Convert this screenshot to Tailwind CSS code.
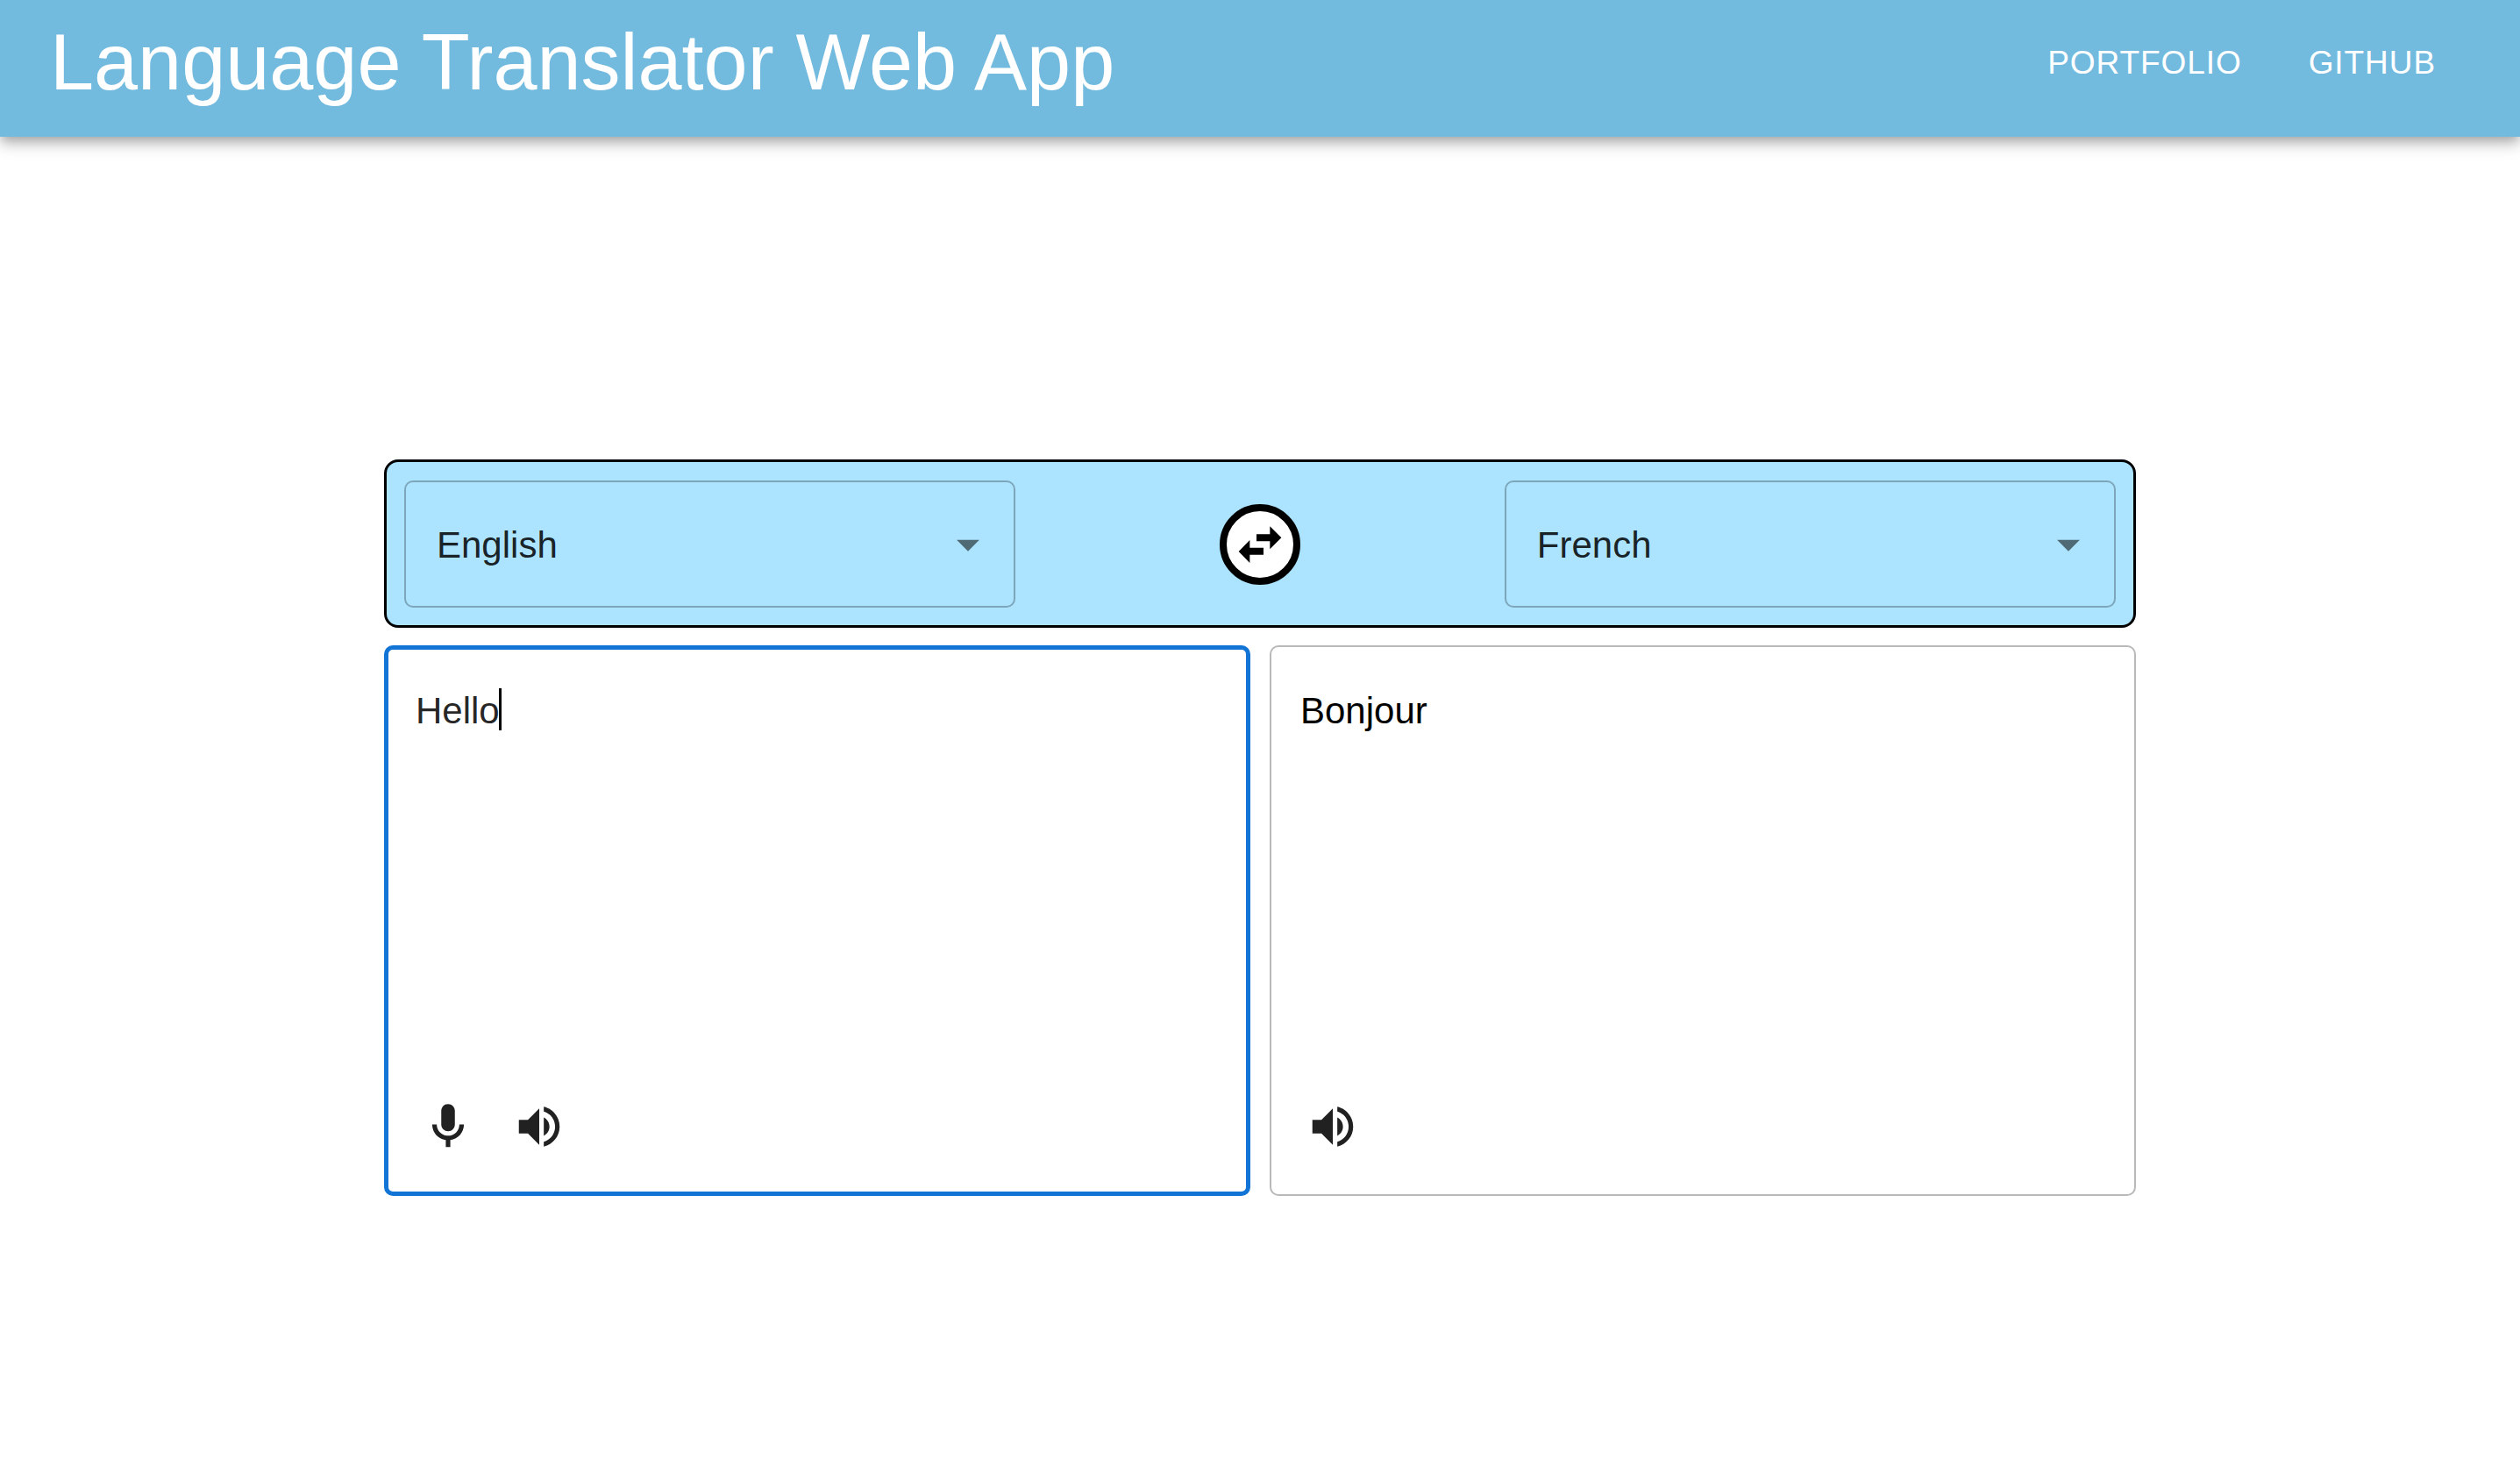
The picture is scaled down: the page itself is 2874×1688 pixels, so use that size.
<!DOCTYPE html>
<html lang="en">
<head>
<meta charset="utf-8">
<title>Language Translator Web App</title>
<script src="https://cdn.jsdelivr.net/npm/@tailwindcss/browser@4"></script>
</head>
<body class="min-h-screen bg-white font-['Liberation_Sans',Arial,sans-serif] text-[42px] leading-[60px] text-black/87">
<header class="flex min-h-[156px] items-center justify-between bg-[#73badf] pb-[14px] pl-[57px] pr-[96px] text-white shadow-[0_5px_10px_-3px_rgba(0,0,0,0.2),0_10px_13px_0_rgba(0,0,0,0.14),0_3px_26px_0_rgba(0,0,0,0.12)]">
  <h1 class="text-[90px] leading-[108px]">Language Translator Web App</h1>
  <nav class="flex gap-[76px] pt-[2px] text-[37px] leading-[64px] tracking-wide uppercase">
    <a href="#portfolio">Portfolio</a>
    <a href="#github">GitHub</a>
  </nav>
</header>

<main class="mx-auto flex max-w-[1998px] flex-col gap-[20px] pt-[368px]">
  <section class="grid grid-cols-[5fr_4fr_5fr] items-center rounded-[16px] border-[3px] border-black bg-[#ace4ff] px-[20px] pb-[20px] pt-[21px]">
    <div class="relative">
      <select aria-label="Source language" class="block h-[145px] w-full appearance-none rounded-[10px] border-2 border-black/27 bg-transparent px-[35px] pt-[2px]">
        <option>English</option>
        <option>French</option>
      </select>
      <svg class="pointer-events-none absolute right-[23px] top-[42px] size-[62px] fill-black/54" viewBox="0 0 24 24"><path d="M7 10l5 5 5-5z"/></svg>
    </div>
    <button type="button" aria-label="Swap languages" class="justify-self-center">
      <svg class="size-[92px]" viewBox="-138 -138 276 276">
        <circle r="126" fill="#fff" stroke="#000" stroke-width="24"/>
        <path d="M-12 -35H34V-62L73 -23L34 16V-11H-12zM12 11V35H-35V63L-73 24L-35 -15V11z"/>
      </svg>
    </button>
    <div class="relative">
      <select aria-label="Target language" class="block h-[145px] w-full appearance-none rounded-[10px] border-2 border-black/27 bg-transparent px-[35px] pt-[2px]">
        <option>French</option>
        <option>English</option>
      </select>
      <svg class="pointer-events-none absolute right-[23px] top-[42px] size-[62px] fill-black/54" viewBox="0 0 24 24"><path d="M7 10l5 5 5-5z"/></svg>
    </div>
  </section>

  <section class="grid grid-cols-2 gap-[22px]">
    <div class="relative flex h-[628px] flex-col rounded-[10px] border-[5px] border-[#1275d6] pb-[22px] pt-[40px]">
      <textarea aria-label="Text to translate" class="block w-full flex-1 resize-none bg-transparent px-[31px] caret-transparent outline-none">Hello</textarea>
      <span aria-hidden="true" class="absolute left-[126px] top-[44px] h-[48px] w-[3px] bg-black"></span>
      <div class="flex px-4">
        <button type="button" aria-label="Speak" class="p-[21px]"><svg class="size-[62px] fill-[#212121]" viewBox="0 0 24 24"><path d="M12 14c1.66 0 3-1.34 3-3V5c0-1.66-1.34-3-3-3S9 3.34 9 5v6c0 1.66 1.34 3 3 3z"/><path d="M17 11c0 2.76-2.24 5-5 5s-5-2.24-5-5H5c0 3.53 2.61 6.43 6 6.92V21h2v-3.08c3.39-.49 6-3.39 6-6.92h-2z"/></svg></button>
        <button type="button" aria-label="Listen to source text" class="p-[21px]"><svg class="size-[62px] fill-[#212121]" viewBox="0 0 24 24"><path d="M3 9v6h4l5 5V4L7 9H3zM16.500 12c0-1.770-1.020-3.290-2.500-4.030v8.050c1.480-.730 2.500-2.250 2.500-4.020zM14 3.230v2.060c2.890.860 5 3.540 5 6.710s-2.110 5.850-5 6.710v2.060c4.010-.910 7-4.490 7-8.770s-2.990-7.860-7-8.770z"/></svg></button>
      </div>
    </div>
    <div class="flex h-[628px] flex-col rounded-[10px] border-2 border-[#b9b9b9] pb-[25px] pt-[43px]">
      <textarea aria-label="Translation" readonly class="block w-full flex-1 resize-none bg-transparent px-[33px] text-black outline-none">Bonjour</textarea>
      <div class="flex px-[18px]">
        <button type="button" aria-label="Listen to translation" class="p-[21px]"><svg class="size-[62px] fill-[#212121]" viewBox="0 0 24 24"><path d="M3 9v6h4l5 5V4L7 9H3zM16.500 12c0-1.770-1.020-3.290-2.500-4.030v8.050c1.480-.730 2.500-2.250 2.500-4.020zM14 3.230v2.060c2.890.860 5 3.540 5 6.710s-2.110 5.850-5 6.710v2.060c4.010-.910 7-4.490 7-8.770s-2.990-7.860-7-8.770z"/></svg></button>
      </div>
    </div>
  </section>
</main>
</body>
</html>
